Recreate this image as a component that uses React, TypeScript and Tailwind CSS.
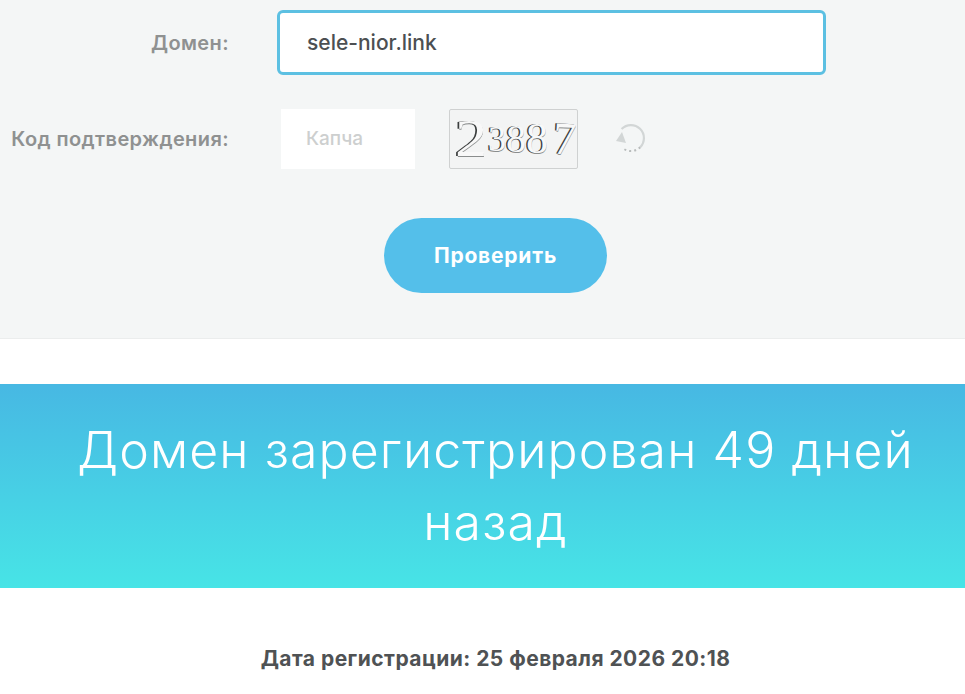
const font = "font-['Inter','Open_Sans',sans-serif]";

function RefreshIcon() {
  return (
    <svg width="36" height="32" viewBox="0 0 36 32" fill="none" className="shrink-0">
      <path d="M8.6 6 A13 13 0 1 1 27.2 24.2" stroke="#d2d6d6" strokeWidth="2.2" />
      <path d="M27.2 24.2 A13 13 0 0 1 10 25.3" stroke="#b8bcbc" strokeWidth="2" strokeDasharray="2 3" />
      <path d="M3 18 L13 20 L9 9 Z" fill="#d2d6d6" />
    </svg>
  );
}

function Captcha() {
  const digit = "inline-block text-[#f8f8f8] [text-shadow:-1.5px_0_0_#3a3d3d,0_1px_0_#8a8d8d]";
  return (
    <div className="w-[129px] h-[60px] ml-[34px] shrink-0 rounded-[2px] border border-[#cfd1d1] bg-[#f3f4f4] flex items-center pl-[5px] overflow-hidden">
      <span className="flex items-center font-['Liberation_Serif',serif] leading-none">
        <span className={`${digit} text-[52px] scale-x-125 origin-left`}>2</span>
        <span className={`${digit} text-[36px] ml-[7px]`}>3</span>
        <span className={`${digit} text-[40px]`}>8</span>
        <span className={`${digit} text-[44px]`}>8</span>
        <span className={`${digit} text-[46px] ml-[5px] rotate-3`}>7</span>
      </span>
    </div>
  );
}

export default function App() {
  return (
    <div className={`h-[694px] overflow-hidden bg-white ${font}`}>
      <section className="h-[339px] bg-[#f4f6f6] border-b border-[#ebeded] pt-[10px]">
        <div className="flex items-center">
          <label className="w-[229px] text-right text-[20px] tracking-[0.4px] font-semibold text-[#8f9191]">Домен:</label>
          <div className="ml-[48px] w-[549px] h-[65px] rounded-[6px] border-[3px] border-[#5cc0e2] bg-white flex items-center pl-[27px] text-[21px] font-medium text-[#4c4f52]">
            sele-nior.link
          </div>
        </div>
        <div className="flex items-center mt-[34px]">
          <label className="w-[229px] text-right text-[20px] tracking-[0.4px] font-semibold text-[#8f9191] whitespace-nowrap">Код подтверждения:</label>
          <div className="ml-[52px] w-[134px] h-[60px] bg-white flex items-center pl-[25px] text-[19px] font-medium text-[#cdcfcf]">
            Капча
          </div>
          <Captcha />
          <div className="ml-[35px]">
            <RefreshIcon />
          </div>
        </div>
        <div className="flex justify-center mt-[49px] pl-[26px]">
          <button className="w-[223px] h-[75px] rounded-full bg-[#54bfea] text-white text-[21px] tracking-[0.8px] font-bold">
            Проверить
          </button>
        </div>
      </section>
      <section className="mt-[45px] h-[204px] bg-gradient-to-b from-[#47b8e3] to-[#47e4e6] flex items-start justify-center pt-[30px] pl-[26px]">
        <h1 className="w-[860px] text-center text-[50px] tracking-[1.1px] leading-[72px] font-light text-white">
          Домен зарегистрирован 49 дней назад
        </h1>
      </section>
      <p className="mt-[55px] pl-[26px] text-center text-[21px] tracking-[0.46px] font-bold text-[#4f5254]">
        Дата регистрации: 25 февраля 2026 20:18
      </p>
    </div>
  );
}
